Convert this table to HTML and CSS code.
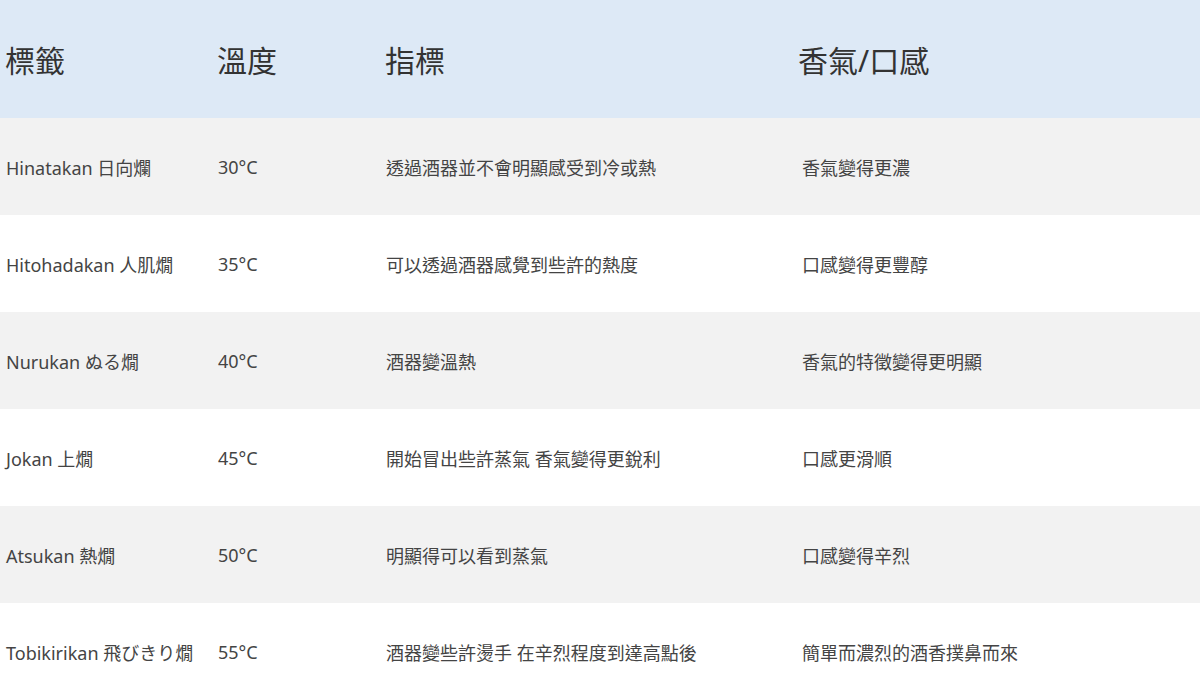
FILE: index.html
```html
<!DOCTYPE html>
<html lang="zh-Hant">
<head>
<meta charset="utf-8">
<title>燗酒溫度</title>
<link rel="stylesheet" href="styles.css">
</head>
<body>
<div class="table">
  <div class="row head">
    <div class="cell">標籤</div>
    <div class="cell">溫度</div>
    <div class="cell">指標</div>
    <div class="cell cell-last">香氣/口感</div>
  </div>
  <div class="row odd">
    <div class="cell">Hinatakan 日向爛</div>
    <div class="cell">30°C</div>
    <div class="cell">透過酒器並不會明顯感受到冷或熱</div>
    <div class="cell">香氣變得更濃</div>
  </div>
  <div class="row">
    <div class="cell">Hitohadakan 人肌燗</div>
    <div class="cell">35°C</div>
    <div class="cell">可以透過酒器感覺到些許的熱度</div>
    <div class="cell">口感變得更豐醇</div>
  </div>
  <div class="row odd">
    <div class="cell">Nurukan ぬる燗</div>
    <div class="cell">40°C</div>
    <div class="cell">酒器變溫熱</div>
    <div class="cell">香氣的特徵變得更明顯</div>
  </div>
  <div class="row">
    <div class="cell">Jokan 上燗</div>
    <div class="cell">45°C</div>
    <div class="cell">開始冒出些許蒸氣 香氣變得更銳利</div>
    <div class="cell">口感更滑順</div>
  </div>
  <div class="row odd">
    <div class="cell">Atsukan 熱燗</div>
    <div class="cell">50°C</div>
    <div class="cell">明顯得可以看到蒸氣</div>
    <div class="cell">口感變得辛烈</div>
  </div>
  <div class="row">
    <div class="cell">Tobikirikan 飛びきり燗</div>
    <div class="cell">55°C</div>
    <div class="cell">酒器變些許燙手 在辛烈程度到達高點後</div>
    <div class="cell">簡單而濃烈的酒香撲鼻而來</div>
  </div>
</div>
</body>
</html>
```
FILE: styles.css
```css
html, body {
  margin: 0;
  padding: 0;
  background: #ffffff;
}
body {
  font-family: "Noto Sans", "Noto Sans CJK TC", sans-serif;
  color: #444444;
}
.table {
  width: 1200px;
  display: flex;
  flex-direction: column;
}
.row {
  display: grid;
  grid-template-columns: 212px 168px 416px 1fr;
  height: 97px;
  align-items: center;
  font-size: 18px;
  background: #ffffff;
}
.row.odd {
  background: #f2f2f2;
}
.row.head {
  height: 118px;
  background: #dde9f6;
  font-size: 30px;
  color: #333333;
}
.cell {
  padding-left: 6px;
  white-space: nowrap;
}
.head .cell {
  padding-left: 5px;
}
.head .cell-last {
  padding-left: 2px;
}
```
